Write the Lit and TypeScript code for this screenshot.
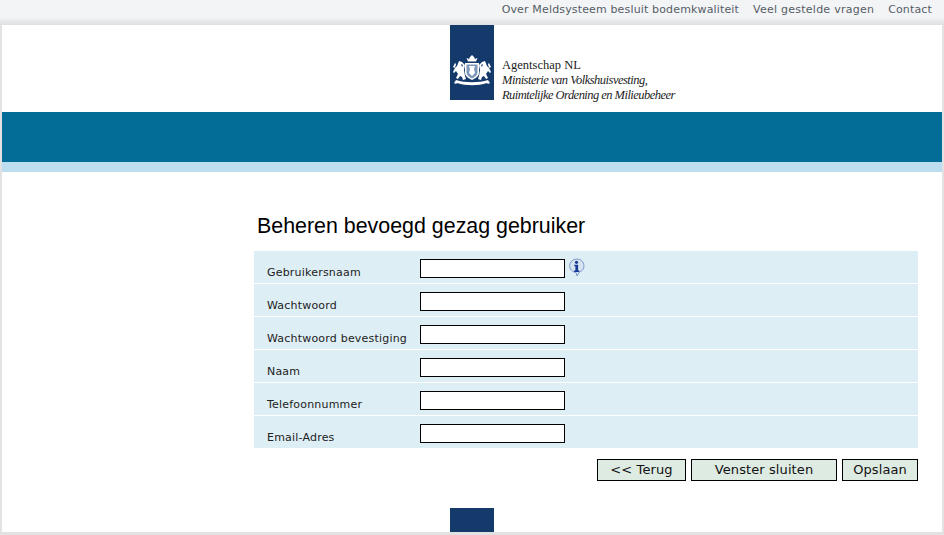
import { LitElement, html, css } from 'lit';
import { customElement } from 'lit/decorators.js';

const FIELDS = ['Gebruikersnaam', 'Wachtwoord', 'Wachtwoord bevestiging', 'Naam', 'Telefoonnummer', 'Email-Adres'];

@customElement('app-root')
export class AppRoot extends LitElement {
  static override styles = css`
    :host {
      display: block;
      height: 535px;
      overflow: hidden;
      background: #e2e2e2;
      font-family: 'DejaVu Sans', Verdana, sans-serif;
      font-size: 11px;
      letter-spacing: 0.2px;
      color: #222;
    }
    .top {
      height: 25px;
      box-sizing: border-box;
      background: linear-gradient(#f3f4f6 0, #f3f4f6 17px, #dedfe0 25px);
      display: flex;
      justify-content: flex-end;
      gap: 14px;
      padding: 3px 12px 0 0;
      line-height: 14px;
      letter-spacing: 0.15px;
      color: #555d66;
    }
    .top span:nth-child(2) {
      letter-spacing: 0.25px;
    }
    .page {
      margin: 0 2px;
      height: 507px;
      background: #fff;
      display: flex;
      flex-direction: column;
    }
    .head {
      height: 87px;
      display: flex;
      padding-left: 448px;
      gap: 8px;
    }
    .logo {
      width: 44px;
      height: 75px;
      background: #143a6b;
      display: flex;
      align-items: flex-end;
      justify-content: center;
      padding-bottom: 13px;
      box-sizing: border-box;
    }
    .org {
      padding-top: 33px;
      font-family: 'Liberation Serif', serif;
      font-size: 12.5px;
      line-height: 15px;
      letter-spacing: 0;
      color: #222;
      white-space: nowrap;
    }
    .org i {
      display: block;
      letter-spacing: -0.5px;
    }
    .org i:last-child {
      letter-spacing: -0.54px;
    }
    .band {
      height: 50px;
      background: #046d97;
    }
    .sub {
      height: 10px;
      background: #bcdeee;
    }
    .main {
      margin-left: 252px;
      width: 664px;
    }
    h1 {
      margin: 41px 0 11px 3px;
      font: 400 21.4px/27px 'Liberation Sans', Arial, sans-serif;
      letter-spacing: 0;
      color: #000;
    }
    .form {
      display: flex;
      flex-direction: column;
      gap: 1px;
      height: 197px;
    }
    .row {
      height: 32px;
      background: #deeef5;
      display: flex;
      align-items: flex-start;
    }
    .row label {
      width: 153px;
      padding: 15px 0 0 13px;
      line-height: 14px;
      white-space: nowrap;
    }
    .row input {
      width: 145px;
      height: 19px;
      box-sizing: border-box;
      margin: 8px 0 0;
      padding: 0;
      border: 1px solid #000;
      background: #fff;
    }
    .info {
      margin: 7px 0 0 3px;
    }
    .buttons {
      display: flex;
      justify-content: flex-end;
      gap: 5px;
      margin-top: 11px;
    }
    button {
      height: 22px;
      padding: 0;
      box-sizing: border-box;
      border: 1px solid #000;
      background: #deebe3;
      font: 13px/18px 'DejaVu Sans', Verdana, sans-serif;
      letter-spacing: 0.1px;
      color: #111;
    }
    .back {
      width: 89px;
    }
    .close {
      width: 146px;
    }
    .save {
      width: 76px;
    }
    .foot {
      width: 44px;
      height: 24px;
      margin: 27px 0 0 448px;
      background: #143a6b;
    }
  `;

  override render() {
    return html`
      <div class="top">
        <span>Over Meldsysteem besluit bodemkwaliteit</span>
        <span>Veel gestelde vragen</span>
        <span>Contact</span>
      </div>
      <div class="page">
        <div class="head">
          <div class="logo">
            <svg width="38" height="32" viewBox="0 0 38 32" fill="#fff">
              <path d="M15 6.500l-1.500-3.500 2.500 1 1-2 2-2 2 2 1 2 2.500-1-1.500 3.500z" />
              <path d="M12 8h14v10c0 3-3 5-7 7-4-2-7-4-7-7z" />
              <path d="M13.500 9.500h11v8.500c0 2-2.500 4-5.500 5.500-3-1.500-5.500-3.500-5.500-5.500z" fill="#7f97b8" />
              <path d="M16 11h6l-1 3 1 4-3 3-3-3 1-4z" />
              <path d="M6 6l3 1 3 3-1 5 1 6 1 3-3 1-1-3-2-1-2 3-2-1 2-4-2-3-2 2-1-1 2-4 2-2z" />
              <path d="M32 6l-3 1-3 3 1 5-1 6-1 3 3 1 1-3 2-1 2 3 2-1-2-4 2-3 2 2 1-1-2-4-2-2z" />
              <path d="M0 12l2-4 1 1-1 4zM38 12l-2-4-1 1 1 4z" />
              <path d="M8 9l2 1-1 2zM30 9l-2 1 1 2z" fill="#143a6b" />
              <path d="M3 25c9 3 23 3 32 0l2 3-2 1-1-1c-9 3-21 3-30 0l-1 1-2-1z" />
            </svg>
          </div>
          <div class="org">
            Agentschap NL
            <i>Ministerie van Volkshuisvesting,</i>
            <i>Ruimtelijke Ordening en Milieubeheer</i>
          </div>
        </div>
        <div class="band"></div>
        <div class="sub"></div>
        <div class="main">
          <h1>Beheren bevoegd gezag gebruiker</h1>
          <div class="form">
            ${FIELDS.map((f, i) => html`
              <div class="row">
                <label>${f}</label>
                <input type="text" />
                ${i === 0 ? html`
                  <svg class="info" width="17" height="19" viewBox="0 0 17 19">
                    <path d="M8.500 1a7.500 6.800 0 0 1 3 13L9 18l-1-3.500A7.500 6.800 0 0 1 8.500 1z" fill="#d6e4f2" stroke="#7f9ccb" />
                    <circle cx="8.500" cy="4.300" r="1.600" fill="#173a94" />
                    <path d="M6.300 6.800h3.800v5.700h1.200V14H6.100v-1.500h1.300V8.300H6.300z" fill="#173a94" />
                  </svg>` : ''}
              </div>`)}
          </div>
          <div class="buttons">
            <button class="back">&lt;&lt; Terug</button>
            <button class="close">Venster sluiten</button>
            <button class="save">Opslaan</button>
          </div>
        </div>
        <div class="foot"></div>
      </div>
    `;
  }
}
